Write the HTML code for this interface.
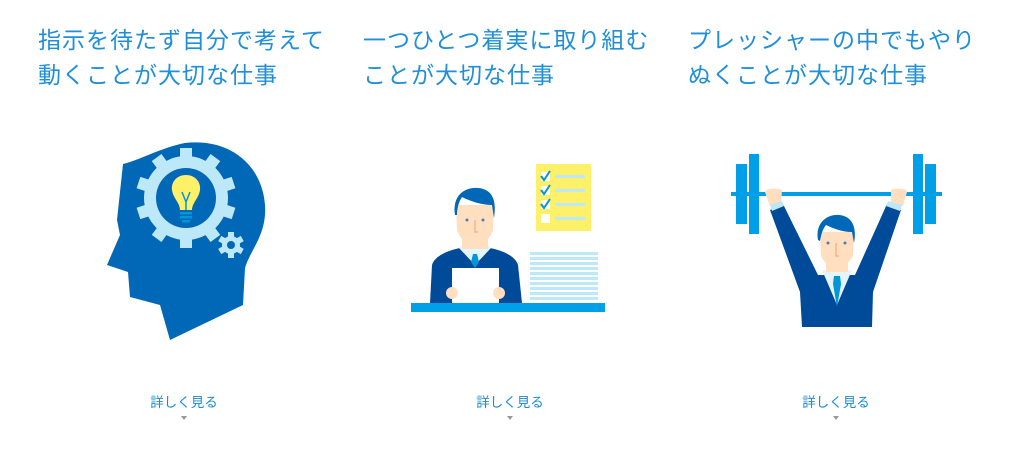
<!DOCTYPE html>
<html><head><meta charset="utf-8"><style>
body{margin:0;width:1014px;height:456px;background:#fff;position:relative;overflow:hidden;font-family:"Liberation Sans","Noto Sans CJK JP",sans-serif}
.t{position:absolute;top:23px;color:#1f8fd9;font-size:23px;line-height:35px;letter-spacing:1px;white-space:nowrap}
.m{position:absolute;top:391px;width:120px;text-align:center;color:#1a8ad6;font-size:13.5px}
.m:after{content:"";display:block;margin:5px auto 0;width:0;height:0;border-left:3px solid transparent;border-right:3px solid transparent;border-top:4px solid #999}
</style></head><body>
<div class="t" style="left:38px">指示を待たず自分で考えて<br>動くことが大切な仕事</div>
<div class="t" style="left:363px">一つひとつ着実に取り組む<br>ことが大切な仕事</div>
<div class="t" style="left:688px">プレッシャーの中でもやり<br>ぬくことが大切な仕事</div>
<div class="m" style="left:124px">詳しく見る</div>
<div class="m" style="left:450px">詳しく見る</div>
<div class="m" style="left:776px">詳しく見る</div>
<svg width="1014" height="456" style="position:absolute;left:0;top:0">
<path fill="#0068b7" d="M123,164 C140,160 160,148 185,143 C230,138 262,165 265,205 C267,235 250,250 245,268 L243,305 L170,340 L160,305 L130,297 L128,272 L107,265 L120,235 L117,220 Z"/>
<g transform="translate(186,198)" fill="#bde8f8">
<circle r="42"/>
<g id="tt"><rect x="-6" y="-50" width="12" height="12"/></g>
<use href="#tt" transform="rotate(36)"/><use href="#tt" transform="rotate(72)"/><use href="#tt" transform="rotate(108)"/><use href="#tt" transform="rotate(144)"/><use href="#tt" transform="rotate(180)"/><use href="#tt" transform="rotate(216)"/><use href="#tt" transform="rotate(252)"/><use href="#tt" transform="rotate(288)"/><use href="#tt" transform="rotate(324)"/>
<circle r="30" fill="#0068b7"/>
</g>
<path fill="#fff06a" d="M186,175 C176,175 171,183 172,190 C173,198 180,203 180,210 L192,210 C192,203 199,198 200,190 C201,183 196,175 186,175Z"/>
<path stroke="#0096d8" stroke-width="1.5" fill="none" d="M182,192 L186,202 L190,192 M186,202 L186,210"/>
<rect x="180" y="212" width="12" height="2.5" fill="#0096d8"/><rect x="180" y="216" width="12" height="2.5" fill="#0096d8"/><rect x="182" y="220" width="8" height="2.5" fill="#0096d8"/>
<g transform="translate(231,245)" fill="#bde8f8"><circle r="9"/><g id="s"><rect x="-3" y="-13" width="6" height="6"/></g><use href="#s" transform="rotate(60)"/><use href="#s" transform="rotate(120)"/><use href="#s" transform="rotate(180)"/><use href="#s" transform="rotate(240)"/><use href="#s" transform="rotate(300)"/><circle r="4" fill="#0068b7"/></g>
<rect x="536" y="164" width="55" height="67" fill="#fff06a"/>
<g fill="#fff"><rect x="541" y="172" width="9" height="9"/><rect x="541" y="186" width="9" height="9"/><rect x="541" y="200" width="9" height="9"/><rect x="541" y="214" width="9" height="9"/></g>
<g stroke="#0096d8" stroke-width="2" fill="none"><path d="M541,176 l3,4 l6,-9"/><path d="M541,190 l3,4 l6,-9"/><path d="M541,204 l3,4 l6,-9"/></g>
<g fill="#bde8f8"><rect x="555" y="175" width="30" height="3"/><rect x="555" y="189" width="30" height="3"/><rect x="555" y="203" width="30" height="3"/><rect x="555" y="217" width="30" height="3"/></g>
<g fill="#bde8f8"><rect x="530" y="252" width="68" height="3"/><rect x="530" y="257" width="68" height="3"/><rect x="530" y="262" width="68" height="3"/><rect x="530" y="267" width="68" height="3"/><rect x="530" y="272" width="68" height="3"/><rect x="530" y="277" width="68" height="3"/><rect x="530" y="282" width="68" height="3"/><rect x="530" y="287" width="68" height="3"/><rect x="530" y="292" width="68" height="3"/><rect x="530" y="297" width="68" height="3"/></g>
<path fill="#004a9a" d="M430,303 L432,265 C435,255 450,250 460,248 L490,248 C500,250 515,255 518,265 L522,303Z"/>
<path fill="#e3f5fd" d="M459,248 L475,265 L491,248 L488,245 L462,245Z"/>
<path fill="#0096d8" d="M473,254 L477,254 L479,262 L475,268 L471,262Z"/>
<rect x="462" y="233" width="26" height="16" fill="#ffdfc0"/>
<path fill="#ffdfc0" d="M456,205 L494,205 L493,230 C490,240 482,245 475,245 C468,245 460,240 457,230Z"/>
<path fill="#0068b7" d="M455,215 C452,195 465,187 478,188 C492,189 497,200 494,218 L492,205 C480,205 468,200 462,197 C458,203 457,210 457,215Z"/>
<circle cx="467" cy="220" r="1.5" fill="#4a7fb5"/><circle cx="483" cy="220" r="1.5" fill="#4a7fb5"/>
<path d="M475,220 L475,232 L478,232" stroke="#f0a070" fill="none"/>
<rect x="452" y="268" width="47" height="36" fill="#fff"/>
<circle cx="452" cy="293" r="6" fill="#ffdfc0"/><circle cx="499" cy="293" r="6" fill="#ffdfc0"/>
<rect x="411" y="303" width="194" height="9" fill="#00a0e9"/>
<rect x="731" y="192" width="211" height="4" fill="#00a0e9"/>
<rect x="736" y="164" width="11" height="60" fill="#00a0e9"/><rect x="749" y="154" width="10" height="80" fill="#00a0e9"/>
<rect x="913" y="154" width="10" height="80" fill="#00a0e9"/><rect x="925" y="164" width="11" height="60" fill="#00a0e9"/>
<path fill="#004a9a" d="M770,210 L783,204 L818,275 L855,275 L887,204 L901,210 L873,292 L872,327 L802,327 L800,292Z"/>
<path fill="#ffdfc0" d="M765,192 C765,188 780,188 782,190 L781,204 L770,206Z"/><path fill="#ffdfc0" d="M891,190 C894,188 907,188 907,192 L903,206 L891,204Z"/>
<path fill="#bde8f8" d="M770,205 L782,201 L784,206 L772,211Z M888,201 L902,205 L900,211 L886,206Z"/>
<path fill="#e3f5fd" d="M822,270 L837,305 L852,270Z"/>
<path fill="#0096d8" d="M834,276 L840,276 L841,284 L837,307 L833,284Z"/>
<rect x="826" y="258" width="22" height="14" fill="#ffdfc0"/>
<path fill="#ffdfc0" d="M820,232 L854,232 L853,255 C850,263 843,267 837,267 C831,267 823,263 821,255Z"/>
<path fill="#0068b7" d="M818,240 C815,222 828,214 839,215 C852,216 857,227 854,243 L852,232 C842,232 832,228 826,225 C822,230 821,236 820,241Z"/>
<circle cx="828" cy="243" r="1.5" fill="#4a7fb5"/><circle cx="845" cy="243" r="1.5" fill="#4a7fb5"/>
<path d="M836,243 L836,256 L839,256" stroke="#f0a070" fill="none"/>
</svg>
</body></html>
